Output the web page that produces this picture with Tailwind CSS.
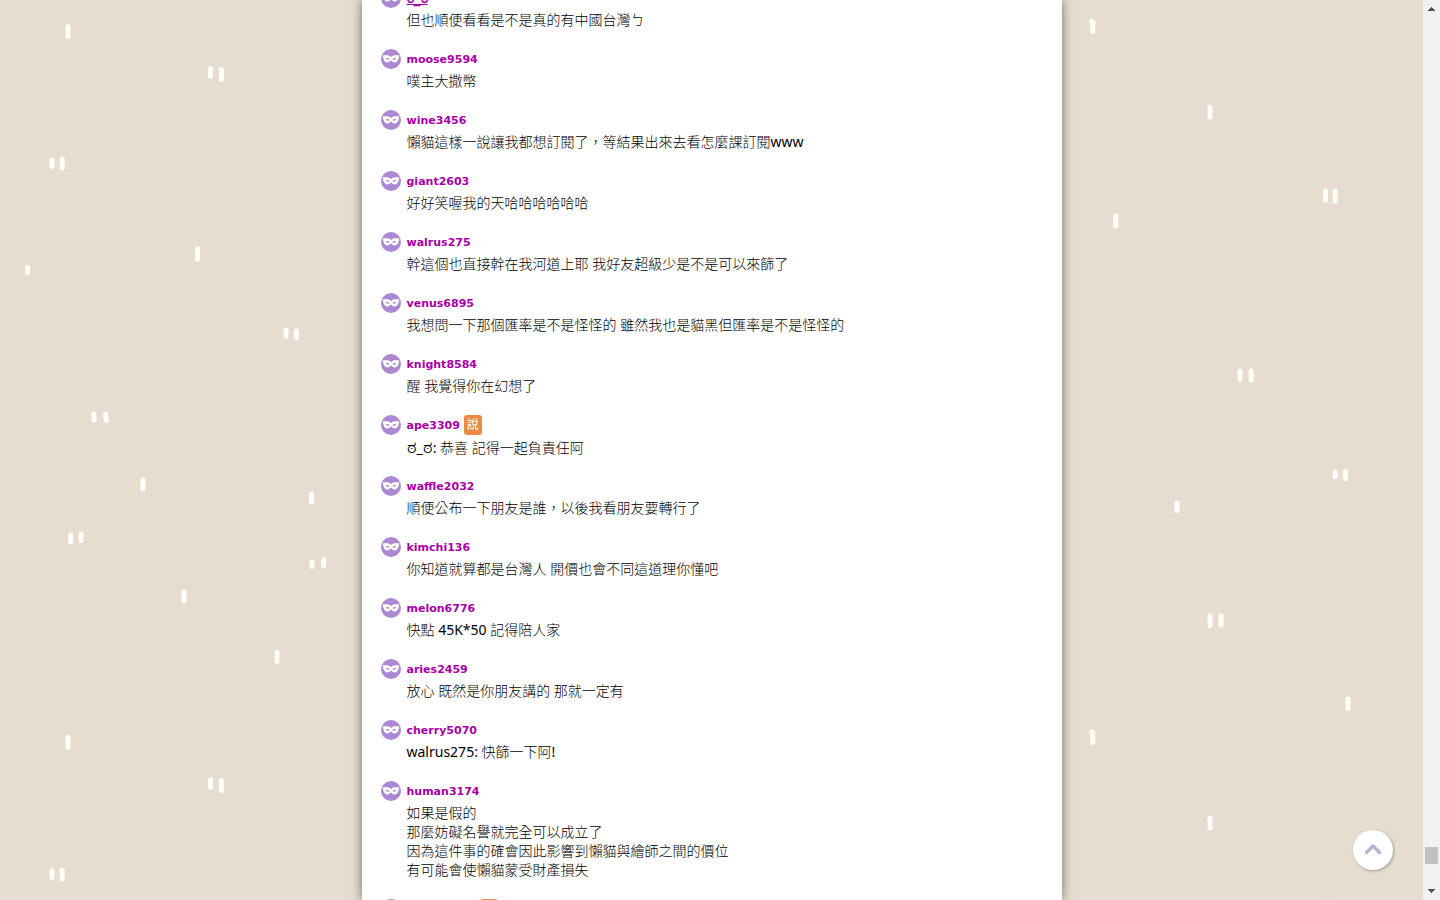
<!DOCTYPE html>
<html lang="zh-Hant">
<head>
<meta charset="utf-8">
<meta name="viewport" content="width=device-width, initial-scale=1">
<title>回應</title>
<script src="https://cdn.jsdelivr.net/npm/@tailwindcss/browser@4"></script>
</head>
<body class="flex h-screen overflow-hidden bg-[#e6ddd0] font-['Noto_Sans','Noto_Sans_CJK_TC_Light','Noto_Sans_CJK_TC',sans-serif] text-sm text-black">
<svg class="hidden" aria-hidden="true">
  <symbol id="mask" viewBox="0 0 20 20">
    <circle cx="10" cy="10" r="10" fill="#ad88d2"/>
    <path fill="#fff" fill-rule="evenodd" d="M1.800 6C4 6.800 6 5.900 7.600 6.500C8.700 6.900 9.200 7.800 10 7.800S11.300 6.900 12.400 6.500C14 5.900 16 6.800 18.200 6C18 8.600 17.400 11 16 12.600C14.900 13.800 12.700 13.900 11.600 12.800C11 12.200 10.600 11.400 10 11.400S9 12.200 8.400 12.800C7.300 13.900 5.100 13.800 4 12.600C2.600 11 2 8.600 1.800 6ZM5 9.400C5.400 10.600 7.400 11.300 8.500 10.300C7.700 9.100 6 8.600 5 9.400ZM15 9.400C14 8.600 12.300 9.100 11.500 10.300C12.600 11.300 14.600 10.600 15 9.400Z"/>
  </symbol>
</svg>

<div class="relative isolate min-w-0 flex-1 overflow-hidden">
  <svg class="absolute inset-0 -z-10 size-full" aria-hidden="true">
    <defs>
      <pattern id="rain" width="1423" height="711" patternUnits="userSpaceOnUse">
        <path fill="none" stroke="#fffefb" stroke-width="5" stroke-linecap="round" d="M68 26.500V36.500M210.500 68.500V76.500M221.300 69.500V79.500M52 160V166.500M62.200 159V168M27.500 267.500V272.500M197.500 248.500V259.500M286 330V336M296.500 331V337.500M93.700 414L94.200 420M105.500 414.500L106.500 420.500M143 480V489M311.500 494V502M70.700 535V542M81 534V540.500M312 562.500V566.500M323.700 559.500V565.500M184 592V601M277 652V661.500M1091.500 21L1092.800 22V31.500M1210 107V117M1115.700 216V226M1325.500 191V200M1335.200 191V201M1240 371V379M1251.200 371V380M1335.200 472V476.500M1345.500 471.500V478.500M1177 503V510.500M1210 616V625.500M1221 616V625M1348 699V708.500"/>
      </pattern>
    </defs>
    <rect width="100%" height="100%" fill="url(#rain)"/>
  </svg>

  <main class="mx-auto h-full max-w-[700px] overflow-hidden bg-white px-[19px] shadow-[0_0_10px_rgba(0,0,0,0.5)]">
    <ul class="-mt-3 flex flex-col gap-5 leading-[19px] [&>li]:flex [&>li]:shrink-0 [&>li]:gap-1.5 [&_svg]:size-5 [&_svg]:shrink-0 [&_h3]:flex [&_h3]:h-5 [&_h3]:items-center [&_h3]:gap-1 [&_h3]:mb-0.5 [&_h3]:font-['DejaVu_Sans','Noto_Sans_CJK_TC',sans-serif] [&_h3]:text-[11px] [&_h3]:font-bold [&_h3]:text-[#a800a8]">
      <li><svg><use href="#mask"/></svg><div><h3><a href="#" class="text-sm leading-none underline">ಠ_ಠ</a></h3><p>但也順便看看是不是真的有中國台灣ㄅ</p></div></li>
      <li><svg><use href="#mask"/></svg><div><h3>moose9594</h3><p>噗主大撒幣</p></div></li>
      <li><svg><use href="#mask"/></svg><div><h3>wine3456</h3><p>懶貓這樣一說讓我都想訂閱了，等結果出來去看怎麼課訂閱www</p></div></li>
      <li><svg><use href="#mask"/></svg><div><h3>giant2603</h3><p>好好笑喔我的天哈哈哈哈哈哈</p></div></li>
      <li><svg><use href="#mask"/></svg><div><h3>walrus275</h3><p>幹這個也直接幹在我河道上耶 我好友超級少是不是可以來篩了</p></div></li>
      <li><svg><use href="#mask"/></svg><div><h3>venus6895</h3><p>我想問一下那個匯率是不是怪怪的 雖然我也是貓黑但匯率是不是怪怪的</p></div></li>
      <li><svg><use href="#mask"/></svg><div><h3>knight8584</h3><p>醒 我覺得你在幻想了</p></div></li>
      <li><svg><use href="#mask"/></svg><div><h3>ape3309 <span class="flex h-5 w-[18px] items-center justify-center rounded-[3px] bg-[#e98b42] text-xs font-normal text-white">說</span></h3><p class="h-[19px]"><span class="text-lg leading-none">ಠ</span>_<span class="text-lg leading-none">ಠ</span>: 恭喜 記得一起負責任阿</p></div></li>
      <li><svg><use href="#mask"/></svg><div><h3>waffle2032</h3><p>順便公布一下朋友是誰，以後我看朋友要轉行了</p></div></li>
      <li><svg><use href="#mask"/></svg><div><h3>kimchi136</h3><p>你知道就算都是台灣人 開價也會不同這道理你懂吧</p></div></li>
      <li><svg><use href="#mask"/></svg><div><h3>melon6776</h3><p>快點 45K*50 記得陪人家</p></div></li>
      <li><svg><use href="#mask"/></svg><div><h3>aries2459</h3><p>放心 既然是你朋友講的 那就一定有</p></div></li>
      <li><svg><use href="#mask"/></svg><div><h3>cherry5070</h3><p>walrus275: 快篩一下阿!</p></div></li>
      <li><svg><use href="#mask"/></svg><div><h3>human3174</h3><p>如果是假的<br>那麼妨礙名譽就完全可以成立了<br>因為這件事的確會因此影響到懶貓與繪師之間的價位<br>有可能會使懶貓蒙受財產損失</p></div></li>
      <li><svg><use href="#mask"/></svg><div><h3><span class="w-[69px]"></span><span class="h-5 w-[18px] rounded-[3px] bg-[#e98b42]"></span></h3></div></li>
    </ul>
  </main>

  <button type="button" aria-label="回到頂端" class="absolute right-[30px] bottom-[30px] flex size-10 items-center justify-center rounded-full bg-white shadow-[1px_1px_3px_rgba(0,0,0,0.3)]">
    <svg class="size-5" viewBox="0 0 20 20" fill="none" stroke="#b0b8d1" stroke-width="3.400" stroke-linecap="round" stroke-linejoin="round" aria-hidden="true"><path d="M3.500 12.500L10 6L16.500 12.500"/></svg>
  </button>
</div>

<div class="flex w-[17px] shrink-0 flex-col items-center bg-[#f1f1f1]" aria-hidden="true">
  <svg class="size-[17px] shrink-0" viewBox="0 0 17 17" shape-rendering="crispEdges"><path fill="#505050" d="M8 7h1v1h1v1h1v1h1v1H5v-1h1V9h1V8h1z"/></svg>
  <div class="grow-[830]"></div>
  <div class="h-[17px] w-[13px] bg-[#c1c1c1]"></div>
  <div class="grow-[19]"></div>
  <svg class="size-[17px] shrink-0" viewBox="0 0 17 17" shape-rendering="crispEdges"><path fill="#505050" d="M5 6h7v1h-1v1h-1v1H9v1H8V9H7V8H6V7H5z"/></svg>
</div>
</body>
</html>
